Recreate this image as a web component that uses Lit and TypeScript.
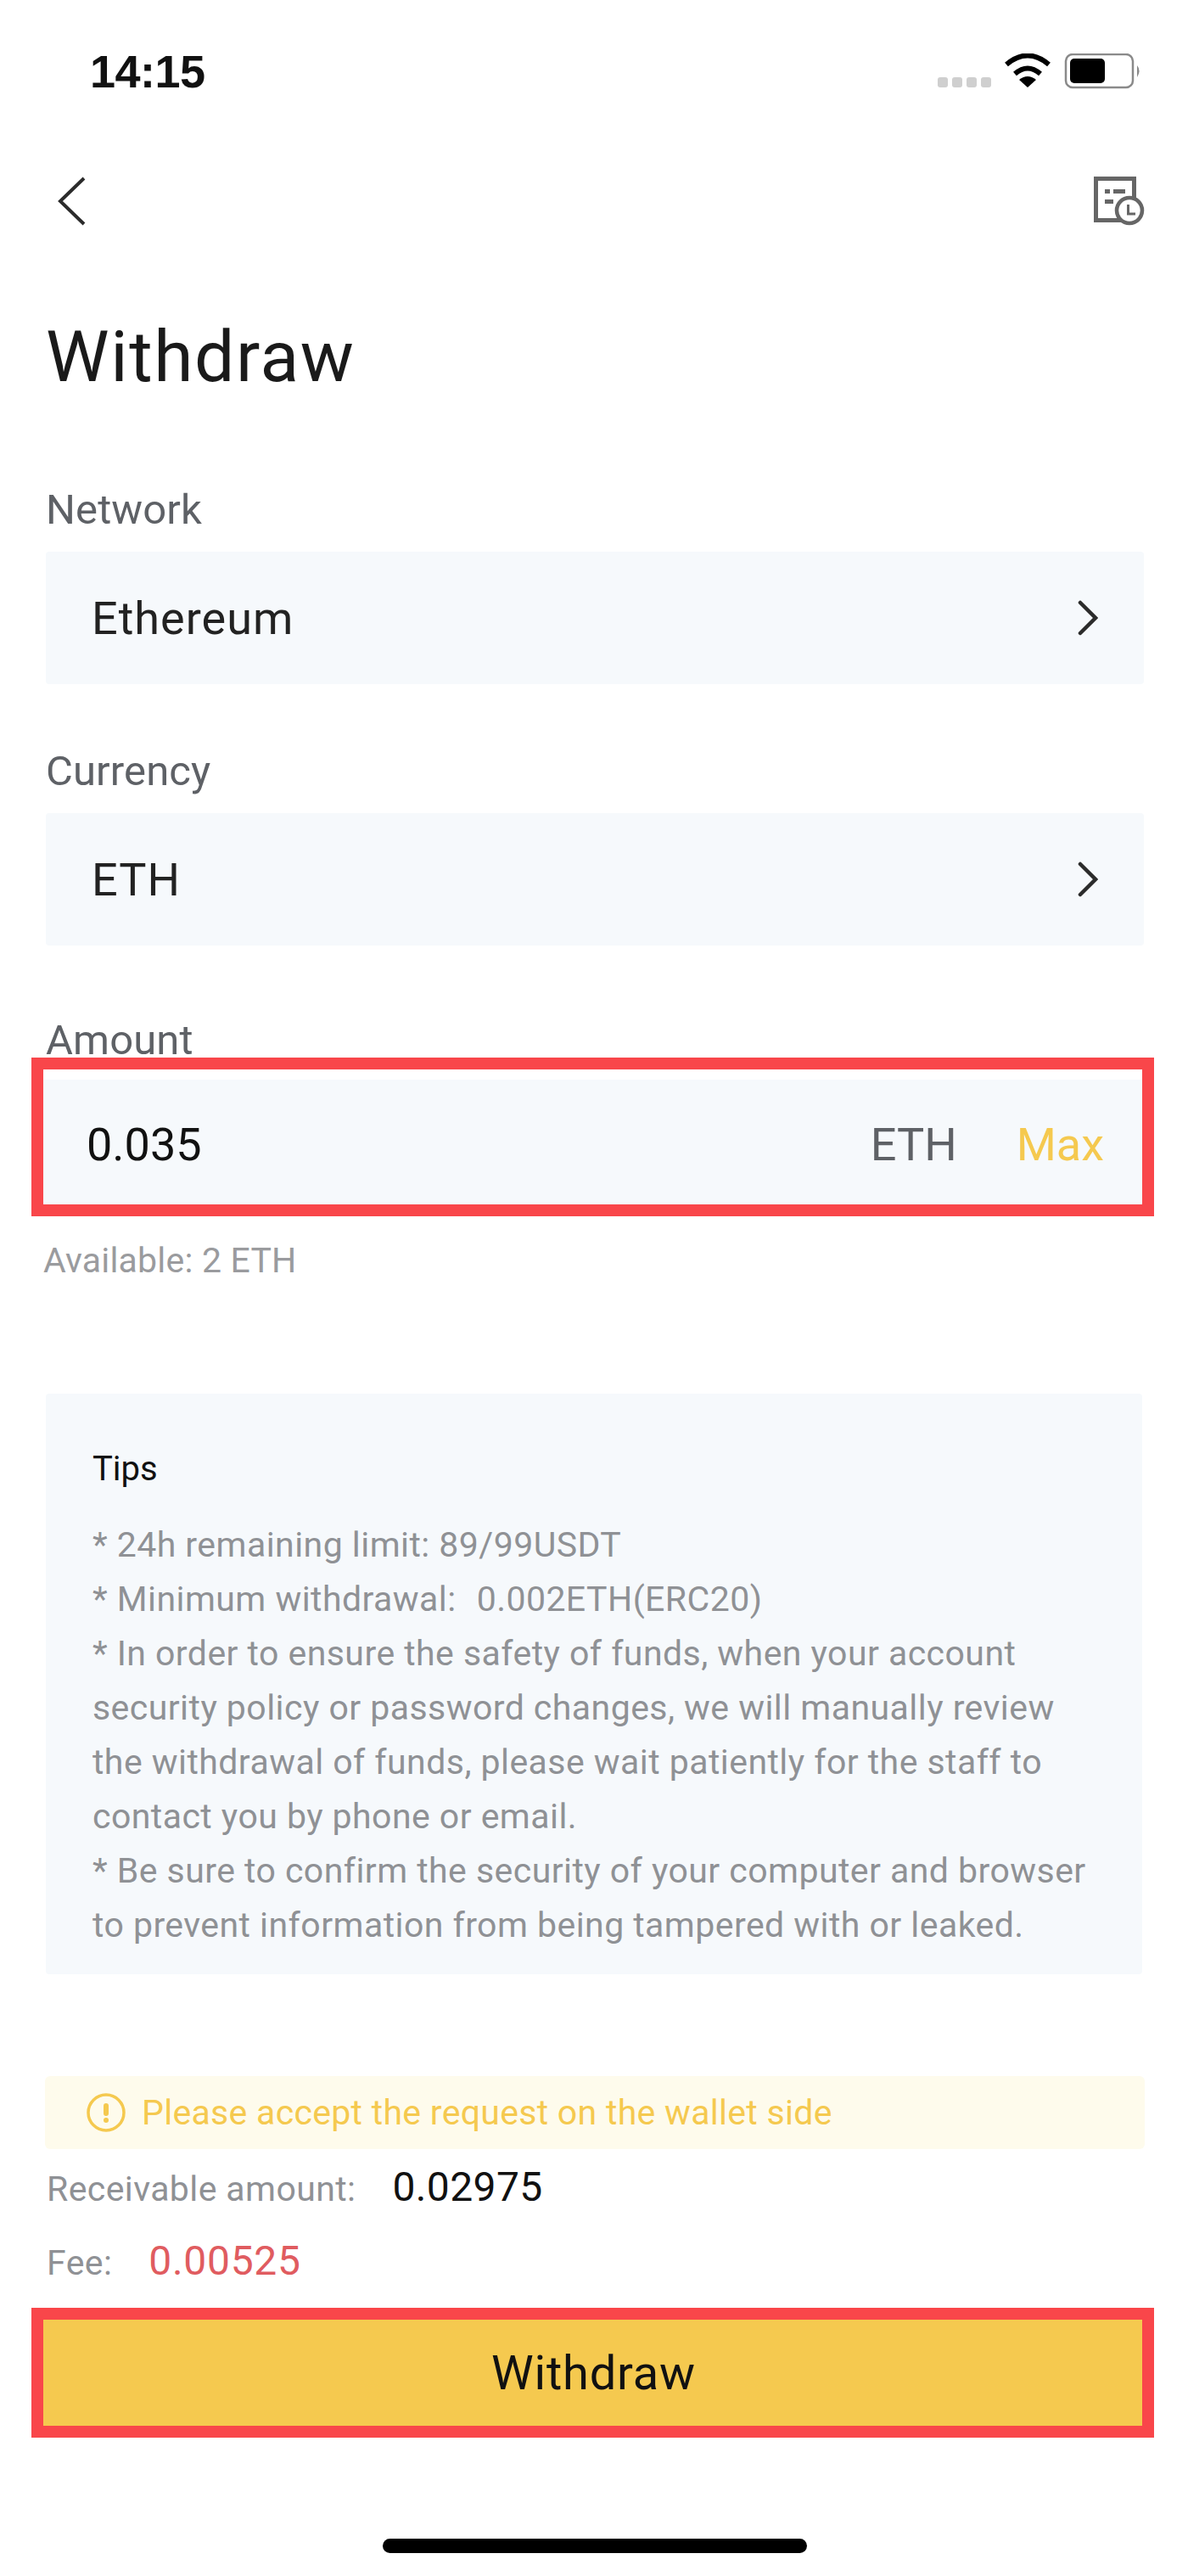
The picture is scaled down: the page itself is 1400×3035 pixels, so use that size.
import { LitElement, html, css } from "lit";
import { customElement } from "lit/decorators.js";

@customElement("app-root")
export class AppRoot extends LitElement {
  static styles = css`
    :host { display: block; width: 1400px; height: 3035px; background: #fff; overflow: hidden; font-family: Roboto, sans-serif; color: #1a1a1a; }
    * { box-sizing: border-box; }
    .status { height: 208px; display: flex; justify-content: space-between; align-items: flex-start; padding: 56px 55px 0 106px; }
    .time { font: bold 54px/56px "Liberation Sans", sans-serif; color: #111; letter-spacing: -0.5px; }
    .status svg { display: block; margin-top: 7px; }
    .nav { height: 58px; display: flex; justify-content: space-between; align-items: flex-start; padding: 0 51px 0 66px; }
    .nav svg { display: block; }
    .page { padding: 0 54px; }
    h1 { margin: 105px 0 0; font-size: 84px; line-height: 100px; font-weight: 400; letter-spacing: 1.6px; color: #1a1a1a; }
    .label { font-size: 49px; line-height: 60px; letter-spacing: 0.1px; color: #5e6166; }
    .label.first { margin-top: 100px; }
    .field { height: 156px; background: #f6f9fc; border-radius: 4px; display: flex; align-items: center; justify-content: space-between; padding: 0 54px 0 54px; font-size: 54px; letter-spacing: 1px; color: #222; margin: 19px -2px 0 0; }
    .gap { margin-top: 73px; }
    .gap3 { margin-top: 82px; }
    .red { border: 14px solid #f9464a; margin: -10px -14px 0 -17px; padding-top: 12px; background: #fff; }
    .amount { height: 147px; background: #f6f9fc; display: flex; align-items: center; padding: 6px 45px 0 51px; font-size: 54px; color: #111; }
    .amount .v { flex: 1; }
    .amount .u { color: #5e6166; }
    .amount .m { color: #f5c94f; margin-left: 70px; }
    .avail { font-size: 41px; line-height: 52px; letter-spacing: 0.2px; color: #9a9b9e; margin-top: 26px; margin-left: -3px; }
    .tips { margin-top: 131px; background: #f6f9fc; border-radius: 4px; height: 684px; padding: 62px 0 0 55px; }
    .tips h2 { margin: 0; font-size: 40px; font-weight: 400; line-height: 54px; color: #111; }
    .tips p { margin: 30px 0 0; font-size: 41px; line-height: 64px; letter-spacing: 0.45px; color: #8f9195; white-space: nowrap; }
    .sp { display: inline-block; width: 24px; }
    .alert { margin: 120px -3px 0 -1px; height: 86px; background: #fefbec; display: flex; align-items: center; gap: 18px; padding-left: 48px; border-radius: 6px; color: #f5c94f; font-size: 41px; letter-spacing: 0.3px; }
    .alert svg { flex: none; }
    .row { display: flex; align-items: baseline; margin-left: 1px; color: #8f9195; font-size: 41px; line-height: 64px; letter-spacing: 0.4px; }
    .row.r1 { margin-top: 13px; }
    .row.r2 { margin-top: 21px; }
    .row .a { font-size: 48px; margin-left: 43px; color: #111; }
    .row .b { font-size: 48px; margin-left: 43px; letter-spacing: 0.7px; color: #e05c60; }
    .btnwrap { border: 14px solid #f9464a; margin: 21px -14px 0 -17px; }
    .btn { height: 125px; background: #f5c94f; display: flex; align-items: center; justify-content: center; font-size: 56px; letter-spacing: 0.8px; color: #111; padding-left: 2px; }
    .home { width: 500px; height: 17px; border-radius: 9px; background: #000; margin: 119px 0 0 451px; }
  `;

  render() {
    const chev = html`<svg width="24" height="42" viewBox="0 0 24 42"><path d="M3 3 L21 21 L3 39" fill="none" stroke="#2b2b2b" stroke-width="4.5" stroke-linecap="round"/></svg>`;
    return html`
      <div class="status">
        <div class="time">14:15</div>
        <svg width="240" height="50" viewBox="0 0 240 50">
          <g fill="#cfcfcf"><rect x="0" y="28" width="12" height="12" rx="3"/><rect x="17" y="28" width="12" height="12" rx="3"/><rect x="34" y="28" width="12" height="12" rx="3"/><rect x="51" y="28" width="12" height="12" rx="3"/></g>
          <g fill="none" stroke="#000" stroke-width="6"><path d="M81 13 Q106 -8 131 13"/><path d="M91 24 Q106 11 121 24"/></g>
          <path d="M106 40 L96 31 Q106 23 116 31 Z" fill="#000"/>
          <rect x="151" y="1" width="79" height="39" rx="8" fill="#fff" stroke="#8a8a8a" stroke-width="2.5"/>
          <rect x="156" y="6" width="41" height="29" rx="5" fill="#000"/>
          <path d="M235 14 Q240 20 235 28 Z" fill="#8a8a8a"/>
        </svg>
      </div>
      <div class="nav">
        <svg width="36" height="58" viewBox="0 0 36 58"><path d="M33 2 L5 29 L33 56" fill="none" stroke="#2b2b2b" stroke-width="4"/></svg>
        <svg width="61" height="58" viewBox="0 0 61 58">
          <path d="M48.5 26 V2.5 H3.5 V51.5 H35" fill="none" stroke="#666" stroke-width="5"/>
          <rect x="14" y="15" width="6" height="5" fill="#666"/><rect x="24" y="15" width="14" height="5" fill="#666"/><rect x="14" y="27" width="10" height="5" fill="#666"/>
          <circle cx="43" cy="40" r="15" fill="#fff" stroke="#666" stroke-width="4.5"/>
          <path d="M41.5 33 V44 H50" fill="none" stroke="#666" stroke-width="3"/>
        </svg>
      </div>
      <div class="page">
        <h1>Withdraw</h1>
        <div class="label first">Network</div>
        <div class="field"><span>Ethereum</span>${chev}</div>
        <div class="label gap">Currency</div>
        <div class="field"><span>ETH</span>${chev}</div>
        <div class="label gap3">Amount</div>
        <div class="red"><div class="amount"><span class="v">0.035</span><span class="u">ETH</span><span class="m">Max</span></div></div>
        <div class="avail">Available: 2 ETH</div>
        <div class="tips">
          <h2>Tips</h2>
          <p>* 24h remaining limit: 89/99USDT<br>* Minimum withdrawal:<span class="sp"></span>0.002ETH(ERC20)<br>* In order to ensure the safety of funds, when your account<br>security policy or password changes, we will manually review<br>the withdrawal of funds, please wait patiently for the staff to<br>contact you by phone or email.<br>* Be sure to confirm the security of your computer and browser<br>to prevent information from being tampered with or leaked.</p>
        </div>
        <div class="alert">
          <svg width="48" height="48" viewBox="0 0 48 48"><ellipse cx="24" cy="24" rx="21" ry="21" fill="none" stroke="#f5c94f" stroke-width="3.5"/><rect x="21" y="13" width="6" height="15" rx="3" fill="#f5c94f"/><circle cx="24" cy="33" r="3" fill="#f5c94f"/></svg>
          <span>Please accept the request on the wallet side</span>
        </div>
        <div class="row r1"><span>Receivable amount:</span><span class="a">0.02975</span></div>
        <div class="row r2"><span>Fee:</span><span class="b">0.00525</span></div>
        <div class="btnwrap"><div class="btn">Withdraw</div></div>
      </div>
      <div class="home"></div>
    `;
  }
}
